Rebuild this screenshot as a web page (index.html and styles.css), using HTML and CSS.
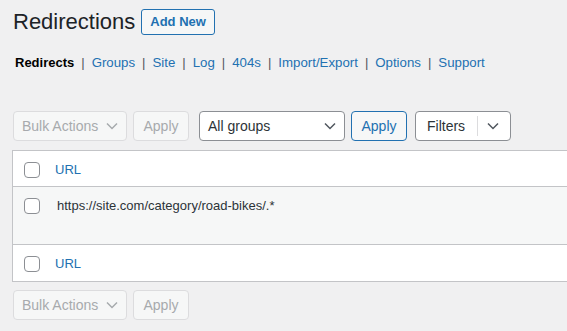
FILE: index.html
```html
<!DOCTYPE html>
<html>
	<head>
		<meta charset="utf-8">
		<title>Redirections</title>
		<link rel="stylesheet" href="styles.css">
	</head>
	<body>
		<div class="wrap">
			<div class="heading">
				<h1 class="title">Redirections</h1>
				<a class="add-new">Add New</a>
			</div>

			<ul class="subsubsub">
				<li class="current">Redirects</li>
				<li class="sep">|</li>
				<li><a>Groups</a></li>
				<li class="sep">|</li>
				<li><a>Site</a></li>
				<li class="sep">|</li>
				<li><a>Log</a></li>
				<li class="sep">|</li>
				<li><a>404s</a></li>
				<li class="sep">|</li>
				<li><a>Import/Export</a></li>
				<li class="sep">|</li>
				<li><a>Options</a></li>
				<li class="sep">|</li>
				<li><a>Support</a></li>
			</ul>

			<div class="tablenav top">
				<div class="select disabled bulk">
					<span>Bulk Actions</span>
					<svg width="12" height="8" viewBox="0 0 12 8"><path d="M1 1.5l5 5 5-5" fill="none" stroke="currentColor" stroke-width="1.5"/></svg>
				</div>
				<button class="button disabled">Apply</button>
				<div class="select groups">
					<span>All groups</span>
					<svg width="12" height="8" viewBox="0 0 12 8"><path d="M1 1.5l5 5 5-5" fill="none" stroke="currentColor" stroke-width="1.5"/></svg>
				</div>
				<button class="button primary-outline">Apply</button>
				<div class="filters">
					<span class="label">Filters</span>
					<span class="divider"></span>
					<svg width="12" height="8" viewBox="0 0 12 8"><path d="M1 1.5l5 5 5-5" fill="none" stroke="currentColor" stroke-width="1.5"/></svg>
				</div>
			</div>

			<div class="list-table">
				<div class="row head">
					<span class="check"></span>
					<a class="col-title">URL</a>
				</div>
				<div class="row item">
					<span class="check"></span>
					<span class="url">https://site.com/category/road-bikes/.*</span>
				</div>
				<div class="row foot">
					<span class="check"></span>
					<a class="col-title">URL</a>
				</div>
			</div>

			<div class="tablenav bottom">
				<div class="select disabled bulk">
					<span>Bulk Actions</span>
					<svg width="12" height="8" viewBox="0 0 12 8"><path d="M1 1.5l5 5 5-5" fill="none" stroke="currentColor" stroke-width="1.5"/></svg>
				</div>
				<button class="button disabled">Apply</button>
			</div>
		</div>
	</body>
</html>
```

FILE: styles.css
```css
*{
	margin: 0;
	padding: 0;
	box-sizing: border-box;
}

html, body{
	overflow: hidden;
}

body{
	background-color: #f0f0f1;
	color: #3c434a;
	font-family: "Liberation Sans", Arial, sans-serif;
	font-size: 13px;
}

ul{
	list-style: none;
}

a{
	color: #2271b1;
}

.wrap{
	padding: 8px 0 0 12px;
	width: 620px;
}

.heading{
	display: flex;
	align-items: center;
	gap: 6px;
	padding-left: 1px;
}

.title{
	font-size: 22px;
	font-weight: 400;
	color: #1d2327;
	line-height: 27px;
}

.add-new{
	display: inline-block;
	border: 1px solid #2271b1;
	border-radius: 3px;
	background-color: #f6f7f7;
	font-weight: 700;
	font-size: 13px;
	line-height: 24px;
	padding: 0 8px;
	height: 26px;
}

.subsubsub{
	display: flex;
	gap: 7px;
	margin-top: 19px;
	padding-left: 3px;
	line-height: 18px;
}

.subsubsub a{
	font-size: 13.25px;
}

.subsubsub .current{
	color: #000;
	font-weight: 700;
}

.subsubsub .sep{
	color: #50575e;
}

.tablenav{
	display: flex;
	gap: 6px;
	height: 30px;
	padding-left: 1px;
}

.tablenav.top{
	margin-top: 39px;
}

.tablenav.bottom{
	margin-top: 8px;
}

.select, .button, .filters{
	display: flex;
	align-items: center;
	height: 30px;
	border: 1px solid #8c8f94;
	border-radius: 4px;
	background-color: #fff;
	font-family: inherit;
	font-size: 14px;
	color: #2c3338;
}

.select{
	justify-content: space-between;
	padding: 0 8px;
}

.select svg{
	color: #50575e;
}

.select.bulk{
	width: 114px;
}

.select.groups{
	width: 146px;
	margin-left: 4px;
}

.button{
	width: 56px;
	justify-content: center;
	background-color: #f6f7f7;
}

.button.disabled, .select.disabled{
	border-color: #dcdcde;
	background-color: #f6f7f7;
	color: #a7aaad;
}

.select.disabled svg{
	color: #a7aaad;
}

.button.primary-outline{
	border-color: #2271b1;
	color: #2271b1;
}

.filters{
	width: 96px;
	margin-left: 2px;
	padding: 0 11px;
}

.filters .label{
	flex: 1;
}

.filters .divider{
	width: 1px;
	height: 20px;
	background-color: #dcdcde;
	margin-right: 9px;
}

.filters svg{
	color: #50575e;
}

.list-table{
	margin-top: 9px;
	border: 1px solid #c3c4c7;
	border-right: none;
	background-color: #fff;
}

.row{
	display: flex;
	align-items: flex-start;
	padding-left: 11px;
}

.row.head{
	height: 36px;
	padding-top: 11px;
	border-bottom: 1px solid #c3c4c7;
}

.row.item{
	height: 58px;
	padding-top: 11px;
	background-color: #f6f7f7;
	border-bottom: 1px solid #c3c4c7;
}

.row.foot{
	height: 36px;
	padding-top: 11px;
}

.check{
	width: 16px;
	height: 16px;
	border: 1px solid #8c8f94;
	border-radius: 4px;
	background-color: #fff;
	flex: none;
}

.col-title{
	margin-left: 15px;
	font-size: 13px;
	line-height: 16px;
}

.url{
	margin-left: 17px;
	color: #2c3338;
	line-height: 16px;
}
```
